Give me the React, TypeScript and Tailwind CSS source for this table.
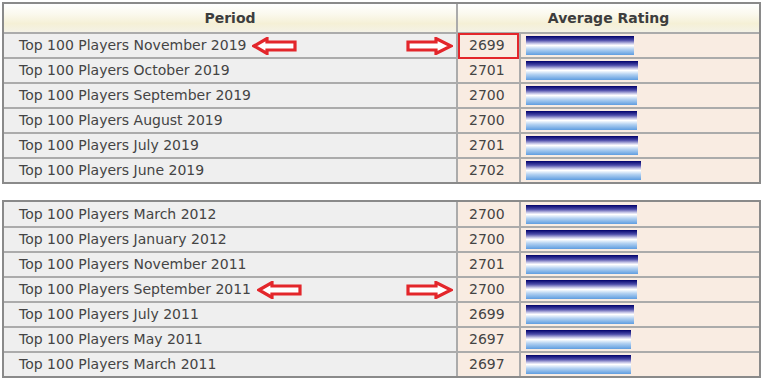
import React from "react";

type Row = { period: string; rating: number; boxed?: boolean; arrows?: boolean };

const barWidth: Record<number, number> = { 2697: 105, 2699: 108, 2700: 111, 2701: 112, 2702: 115 };

const recent: Row[] = [
  { period: "Top 100 Players November 2019", rating: 2699, boxed: true, arrows: true },
  { period: "Top 100 Players October 2019", rating: 2701 },
  { period: "Top 100 Players September 2019", rating: 2700 },
  { period: "Top 100 Players August 2019", rating: 2700 },
  { period: "Top 100 Players July 2019", rating: 2701 },
  { period: "Top 100 Players June 2019", rating: 2702 },
];

const older: Row[] = [
  { period: "Top 100 Players March 2012", rating: 2700 },
  { period: "Top 100 Players January 2012", rating: 2700 },
  { period: "Top 100 Players November 2011", rating: 2701 },
  { period: "Top 100 Players September 2011", rating: 2700, arrows: true },
  { period: "Top 100 Players July 2011", rating: 2699 },
  { period: "Top 100 Players May 2011", rating: 2697 },
  { period: "Top 100 Players March 2011", rating: 2697 },
];

function LeftArrow() {
  return (
    <svg width="45" height="18" viewBox="0 0 45 18" className="ml-[6px] shrink-0">
      <polygon
        points="2,9 15,1.5 15,5 43,5 43,13 15,13 15,16.5"
        fill="#fff"
        stroke="#e3262b"
        strokeWidth="3.2"
        strokeLinejoin="miter"
      />
    </svg>
  );
}

function RightArrow() {
  return (
    <svg width="47" height="18" viewBox="0 0 47 18" className="shrink-0">
      <polygon
        points="2,5 30,5 30,1.5 45,9 30,16.5 30,13 2,13"
        fill="#fff"
        stroke="#e3262b"
        strokeWidth="3.2"
        strokeLinejoin="miter"
      />
    </svg>
  );
}

function DataRow({ row, first }: { row: Row; first?: boolean }) {
  return (
    <div
      className={
        first
          ? "grid grid-cols-[452px_63px_1fr] h-[24px]"
          : "grid grid-cols-[452px_63px_1fr] h-[25px] border-t-2 border-[#ababab]"
      }
    >
      <div className="bg-[#efefef] flex items-center pl-[15px] pr-[3px]">
        <span>{row.period}</span>
        {row.arrows && <LeftArrow />}
        {row.arrows && (
          <span className="ml-auto flex">
            <RightArrow />
          </span>
        )}
      </div>
      <div className="relative bg-[#f9ece2] border-l-2 border-[#ababab] flex items-center pl-[11px]">
        {row.rating}
        {row.boxed && (
          <div className="absolute left-0 right-0 -top-[1px] -bottom-[2px] border-2 border-[#e3262b] z-10" />
        )}
      </div>
      <div className="bg-[#f9ece2] border-l-2 border-[#ababab] flex items-center pl-[5px]">
        <div
          className="h-[19px] bg-[linear-gradient(to_bottom,#00006a_0%,#4a4aa8_22%,#d8d8f0_42%,#ffffff_50%,#b4d2f2_70%,#5f9de0_100%)]"
          style={{ width: barWidth[row.rating] }}
        />
      </div>
    </div>
  );
}

export default function App() {
  return (
    <div className="w-[767px] h-[380px] overflow-hidden bg-white pt-[2px] text-[14px] text-[#444] font-['DejaVu_Sans',Verdana,sans-serif]">
      <div className="ml-[2px] w-[759px] border-2 border-[#8a8a8a]">
        <div className="grid grid-cols-[452px_1fr] h-[28px] font-bold text-[14px] text-[#3d3d3d] bg-[linear-gradient(to_bottom,#ffffff_0%,#fbf9ee_35%,#f5f0d6_70%,#f4f2e6_100%)]">
          <div className="flex items-center justify-center">Period</div>
          <div className="flex items-center justify-center border-l-2 border-[#ababab]">Average Rating</div>
        </div>
        {recent.map((r) => (
          <DataRow key={r.period} row={r} />
        ))}
      </div>
      <div className="ml-[2px] mt-[16px] w-[759px] border-2 border-[#8a8a8a]">
        {older.map((r, i) => (
          <DataRow key={r.period} row={r} first={i === 0} />
        ))}
      </div>
    </div>
  );
}
